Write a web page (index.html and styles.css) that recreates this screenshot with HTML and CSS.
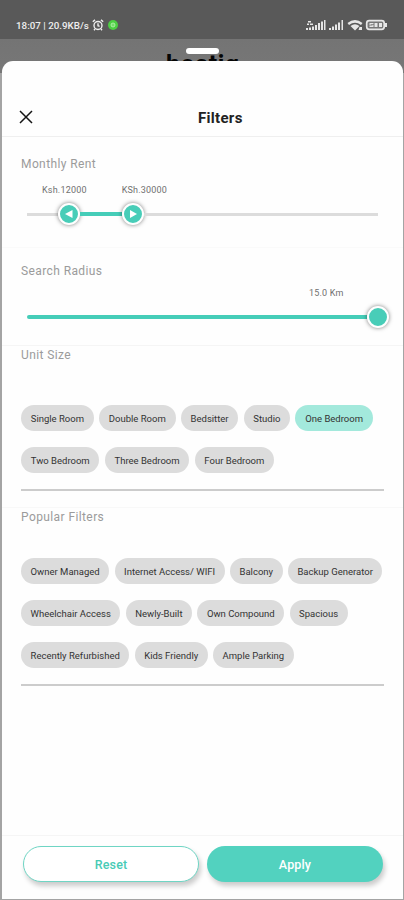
FILE: index.html
```html
<!DOCTYPE html>
<html lang="en">
<head>
<meta charset="utf-8">
<title>Filters</title>
<link rel="stylesheet" href="styles.css">
</head>
<body>
<header class="status">
  <span class="status-text">18:07 | 20.9KB/s</span>
  <svg class="alarm" width="12" height="12" viewBox="0 0 12 12" fill="none" stroke="#eee" stroke-width="1.4"><circle cx="6" cy="6.500" r="4"/><path d="M6 4.300v2.400l1.600.700M.8 2.800 3 .9M11.200 2.800 9 .9M3 10l-1 1.200M9 10l1 1.200"/></svg>
  <svg class="dot" width="10" height="10" viewBox="0 0 10 10"><circle cx="5" cy="5" r="5" fill="#4dce43"/><circle cx="5" cy="5" r="2" fill="#74dd69" stroke="#b9f0b2" stroke-width=".8"/></svg>
  <svg class="system" width="82" height="12" viewBox="0 0 82 12" fill="#e6e6e6">
    <path d="M0 9h2v2H0zM3 8.500h2V11H3zM6 7.500h2V11H6zM9 6h2v5H9zM12 4h2v7h-2zM15 2.500h2V11h-2zM18 1h1.500v10H18zM2 2h3v1.500H2zM1 4.500h2V6H1zM4 4.500h3V6H4z"/>
    <path d="M23 9h2v2h-2zM26 7.500h2V11h-2zM29 5.500h2V11h-2zM32 3.500h2V11h-2zM35.500 1H37v10h-1.500z"/>
    <path d="M41.500 4q7.500-6 15 0l-1.500 2q-6-4.500-12 0z"/>
    <path d="M44.500 7q4.500-3.500 9 0L49 11.500zM53.500 8H56v3h-3.500z"/>
    <rect x="60.700" y="1.700" width="17.500" height="8.600" rx="2.500" fill="#777" stroke="#e6e6e6" stroke-width="1.700"/><path d="M79 4h2v4h-2zM63.500 4h4v1h-3v.8h3V8h-4V7h3v-.5h-3zM68.500 4h3v4h-3zM73 4h3v4h-3z"/>
  </svg>
</header>
<div class="backdrop"><span class="brand">hostiq</span><span class="handle"></span></div>
<main class="sheet">
  <div class="title-bar">
    <svg class="close" width="14" height="14" viewBox="0 0 14 14" stroke="#151515" stroke-width="1.500"><path d="M1 1l12 12M13 1L1 13"/></svg>
    <h1>Filters</h1>
  </div>
  <section class="rent">
    <h2>Monthly Rent</h2>
    <div class="rent-values"><span>Ksh.12000</span><span>KSh.30000</span></div>
    <div class="track">
      <span class="bar before"></span>
      <span class="knob"><svg width="18" height="18" viewBox="0 0 18 18"><path d="M12.500 5v8L5 9z" fill="#fff"/></svg></span>
      <span class="bar active"></span>
      <span class="knob"><svg width="18" height="18" viewBox="0 0 18 18"><path d="M6 5v8l7-4z" fill="#fff"/></svg></span>
      <span class="bar after"></span>
    </div>
  </section>
  <section class="radius">
    <h2>Search Radius</h2>
    <div class="radius-value">15.0 Km</div>
    <div class="track"><span class="bar active"></span><span class="knob"></span></div>
  </section>
  <section class="options units">
    <h2>Unit Size</h2>
    <div class="chips">
      <div class="row"><span class="chip">Single Room</span><span class="chip">Double Room</span><span class="chip">Bedsitter</span><span class="chip">Studio</span><span class="chip selected">One Bedroom</span></div>
      <div class="row"><span class="chip">Two Bedroom</span><span class="chip">Three Bedroom</span><span class="chip">Four Bedroom</span></div>
    </div>
  </section>
  <section class="options popular">
    <h2>Popular Filters</h2>
    <div class="chips">
      <div class="row"><span class="chip">Owner Managed</span><span class="chip">Internet Access/ WIFI</span><span class="chip">Balcony</span><span class="chip">Backup Generator</span></div>
      <div class="row"><span class="chip">Wheelchair Access</span><span class="chip">Newly-Built</span><span class="chip">Own Compound</span><span class="chip">Spacious</span></div>
      <div class="row"><span class="chip">Recently Refurbished</span><span class="chip">Kids Friendly</span><span class="chip">Ample Parking</span></div>
    </div>
  </section>
  <footer class="actions"><button class="button reset">Reset</button><button class="button apply">Apply</button></footer>
</main>
</body>
</html>
```
FILE: styles.css
```css
* { box-sizing: border-box; }
body {
  margin: 0;
  width: 404px;
  height: 900px;
  overflow: hidden;
  display: flex;
  flex-direction: column;
  background: #a4a4a4;
  font-family: Roboto, sans-serif;
}
.status {
  height: 39px;
  flex: none;
  display: flex;
  align-items: center;
  padding: 11px 16px 0;
  background: #595959;
  color: #eee;
}
.status-text { width: 75px; font-size: 9.8px; font-weight: 500; white-space: nowrap; }
.alarm { margin-left: 1px; }
.dot { margin-left: 4px; }
.system { margin-left: auto; }
.backdrop {
  position: relative;
  height: 34px;
  flex: none;
  background: linear-gradient(#747474, #777);
}
.brand {
  display: block;
  padding: 11px 0 0 166px;
  color: #050505;
  font: 700 25px/29px Roboto, sans-serif;
  letter-spacing: .6px;
}
.handle {
  position: absolute;
  left: 186px;
  top: 9px;
  width: 33px;
  height: 6px;
  border-radius: 3px;
  background: #fff;
}
.sheet {
  position: relative;
  display: flex;
  flex-direction: column;
  height: 838px;
  flex: none;
  margin: -12px 1px 0 2px;
  border-radius: 11px 11px 0 0;
  background: #fefefe;
}
.title-bar {
  height: 76px;
  flex: none;
  display: flex;
  align-items: flex-start;
  padding: 49px 0 0 17px;
  border-bottom: 1px solid #efefef;
}
h1, h2 { margin: 0; }
h1 {
  margin-left: 165px;
  font-size: 15px;
  line-height: 16px;
  font-weight: 700;
  letter-spacing: .3px;
  color: #222;
}
h2 {
  padding-left: 19px;
  font-size: 12px;
  line-height: 16px;
  font-weight: 400;
  letter-spacing: .4px;
  color: #9b9b9b;
}
.rent { height: 111px; flex: none; padding-top: 19px; border-bottom: 1px solid #fafafa; }
.rent-values { display: flex; gap: 35px; padding: 12px 0 0 40px; }
.rent-values, .radius-value { font-size: 9px; line-height: 12px; letter-spacing: .2px; color: #707070; }
.track { display: flex; align-items: center; width: 351px; height: 22px; margin: 7px 0 0 25px; }
.bar { height: 3px; background: #dcdcdc; }
.before { width: 31px; }
.rent .active { width: 42px; }
.after { flex: 1; }
.bar.active { height: 4px; background: #45cdb8; }
.knob {
  width: 22px;
  height: 22px;
  flex: none;
  border: 2px solid #fff;
  border-radius: 50%;
  background: #48cdb8;
  box-shadow: 0 0 4px rgba(0, 0, 0, .5);
}
.knob svg { display: block; }
.radius { height: 98px; flex: none; padding-top: 15px; border-bottom: 1px solid #f5f5f5; }
.radius-value { padding: 8px 0 0 307px; }
.radius .track { width: 362px; }
.radius .active { flex: 1; border-radius: 2px 0 0 2px; }
.options { flex: none; }
.units { height: 162px; padding-top: 1px; border-bottom: 1px solid #f8f8f8; }
.popular { padding-top: 1px; }
.chips {
  display: flex;
  flex-direction: column;
  gap: 16px;
  width: 363px;
  margin: 42px 0 0 19px;
  padding-bottom: 16px;
  border-bottom: 2px solid #ccc;
}
.popular .chips { margin-top: 33px; }
.row { display: flex; gap: 5.300px; }
.chip {
  height: 26px;
  padding: 0 9.550px;
  border-radius: 13px;
  background: #dcdcdc;
  color: #333;
  font-size: 9.500px;
  line-height: 27px;
  white-space: nowrap;
}
.units .chip { padding: 0 9.750px; }
.selected { background: #a3e9dc; }
.actions {
  display: flex;
  gap: 8px;
  height: 64px;
  margin-top: auto;
  padding: 10px 20px 0 21px;
  border-top: 1px solid #f5f5f5;
}
.button {
  flex: 1;
  height: 36px;
  border: 0;
  border-radius: 18px;
  font: 500 12.500px/37px Roboto, sans-serif;
  letter-spacing: .15px;
  padding: 0;
  box-shadow: 2px 4px 5px rgba(0, 0, 0, .2);
}
.reset { flex: 0 0 176px; border: 1px solid #6fd5c4; background: #fff; color: #48cbb6; line-height: 35px; }
.apply { background: #52d2bf; color: #fff; }
```
